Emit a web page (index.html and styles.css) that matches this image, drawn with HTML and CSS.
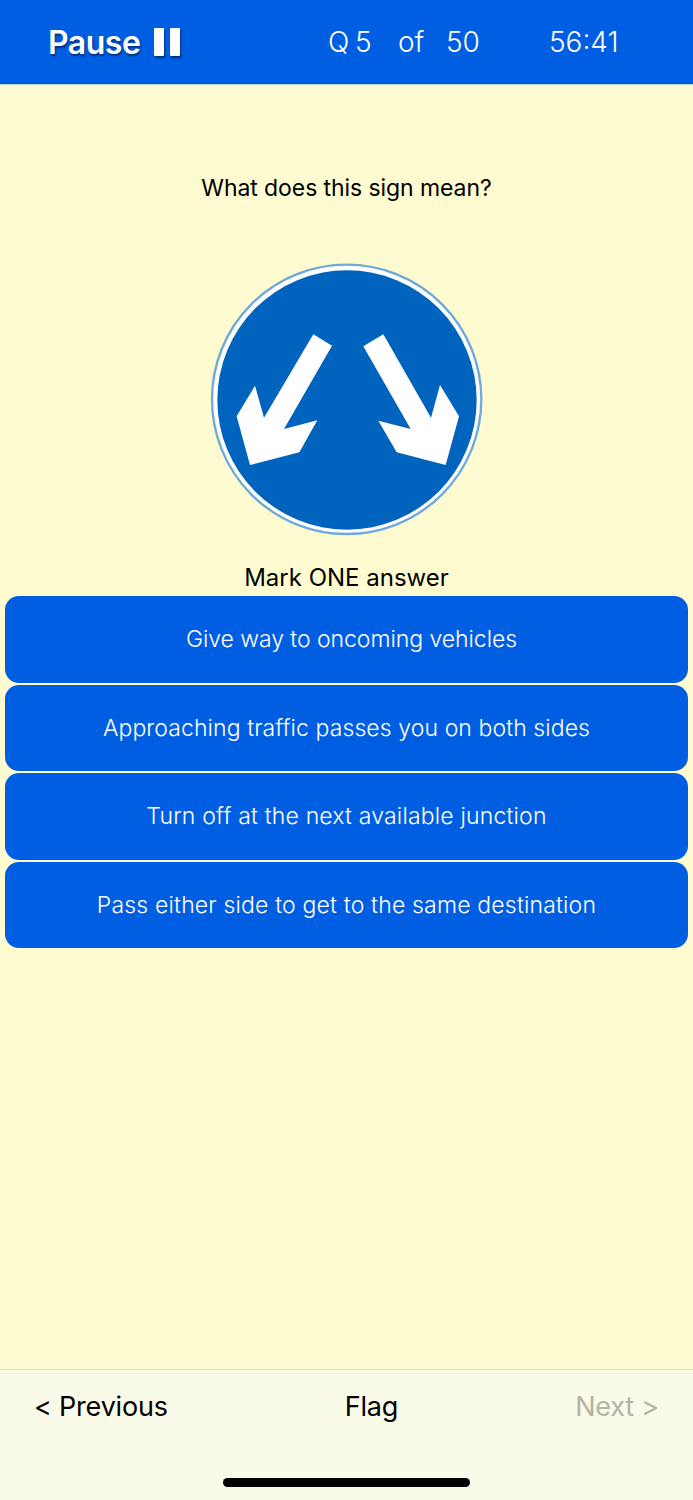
FILE: index.html
```html
<!DOCTYPE html>
<html lang="en">
<head>
    <meta charset="UTF-8">
    <meta name="viewport" content="width=device-width, initial-scale=1.0">
    <title>Theory Test</title>
    <link rel="stylesheet" href="styles.css">
</head>
<body>
    <header class="topbar">
        <div class="pause">
            <span class="pause-label">Pause</span>
            <span class="pause-icon"><i></i><i></i></span>
        </div>
        <div class="progress">
            <span class="q-num">Q 5</span>
            <span class="q-of">of</span>
            <span class="q-total">50</span>
        </div>
        <div class="timer">56:41</div>
    </header>

    <main class="content">
        <p class="question">What does this sign mean?</p>
        <svg class="sign" viewBox="30 24 819 819" aria-label="Road sign">
            <circle cx="440" cy="433" r="404" fill="#ffffff" stroke="#6fa9dc" stroke-width="7"/>
            <circle cx="441" cy="435" r="389" fill="#0063bd"/>
            <polygon fill="#ffffff" points="340,238 396,272 252,522 352,496 298,592 150,630 110,484 165,392 192,488"/>
            <polygon fill="#ffffff" points="550,238 490,274 632,522 535,497 590,592 737,630 777,484 720,390 693,488"/>
        </svg>
        <p class="mark">Mark ONE answer</p>
        <div class="answers">
            <button class="answer answer-first">Give way to oncoming vehicles</button>
            <button class="answer answer-tight">Approaching traffic passes you on both sides</button>
            <button class="answer">Turn off at the next available junction</button>
            <button class="answer">Pass either side to get to the same destination</button>
        </div>
    </main>

    <footer class="bottombar">
        <div class="nav">
            <span class="nav-prev">&lt; Previous</span>
            <span class="nav-flag">Flag</span>
            <span class="nav-next">Next &gt;</span>
        </div>
        <div class="home-bar"></div>
    </footer>
</body>
</html>
```

FILE: styles.css
```css
body {
    font-family: Inter, "Liberation Sans", sans-serif;
    background-color: #fefbd0;
    margin: 0;
    padding: 0;
    height: 1500px;
    display: flex;
    flex-direction: column;
    overflow: hidden;
}

.topbar {
    height: 84px;
    flex: none;
    border-bottom: 1px solid #b9d6c4;
    background-color: #005ee2;
    color: #ffffff;
    display: flex;
    align-items: center;
    padding-left: 48px;
    font-size: 28px;
}

.pause {
    width: 280px;
    display: flex;
    align-items: center;
    gap: 14px;
    font-weight: 600;
    font-size: 32px;
    letter-spacing: -0.5px;
    text-shadow: 1px 2px 2px rgba(0, 0, 40, 0.5);
}

.pause-icon {
    display: flex;
    gap: 6px;
}

.pause-icon i {
    display: block;
    width: 10px;
    height: 28px;
    border-radius: 1px;
    background-color: #ffffff;
    box-shadow: 1px 2px 2px rgba(0, 0, 40, 0.5);
}

.progress {
    width: 221px;
    display: flex;
    font-weight: 300;
}

.q-num {
    width: 70px;
    word-spacing: -2px;
}

.q-of {
    width: 48px;
}

.timer {
    font-weight: 300;
}

.content {
    flex: 1;
    padding: 0 5px;
    display: flex;
    flex-direction: column;
    align-items: center;
}

.question {
    margin: 89px 0 0;
    height: 28px;
    line-height: 28px;
    font-size: 23px;
    letter-spacing: -0.08px;
    color: #000000;
}

.sign {
    display: block;
    width: 273px;
    height: 273px;
    margin-top: 61px;
}

.mark {
    margin: 26px 0 0;
    height: 34px;
    line-height: 32px;
    font-size: 24px;
    color: #000000;
}

.answers {
    width: 100%;
    display: flex;
    flex-direction: column;
    gap: 2px;
}

.answer {
    height: 86.5px;
    padding: 0;
    border: none;
    border-radius: 14px;
    background-color: #005ee2;
    color: #ffffff;
    font-family: inherit;
    font-size: 23px;
    font-weight: 300;
    letter-spacing: 0.18px;
    text-align: center;
}

.answer-first {
    padding-left: 10px;
    letter-spacing: -0.05px;
}

.answer-tight {
    letter-spacing: 0.09px;
}

.bottombar {
    height: 131px;
    flex: none;
    box-sizing: border-box;
    border-top: 1px solid #e0e0c4;
    background-color: #fafae8;
    display: flex;
    flex-direction: column;
    align-items: center;
}

.nav {
    width: 100%;
    box-sizing: border-box;
    padding: 19px 34px 0;
    display: flex;
    justify-content: space-between;
    font-size: 27px;
    line-height: 36px;
    letter-spacing: -0.2px;
    color: #000000;
}

.nav-next {
    color: #b3b3a8;
}

.home-bar {
    width: 247px;
    height: 9px;
    margin-top: 53px;
    border-radius: 5px;
    background-color: #000000;
}
```
